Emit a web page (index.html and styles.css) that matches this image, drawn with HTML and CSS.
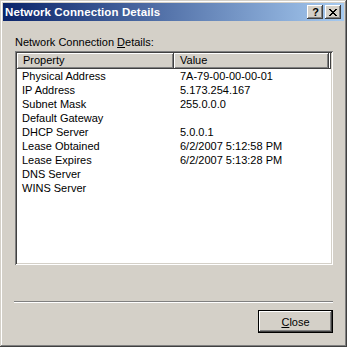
FILE: index.html
```html
<!DOCTYPE html>
<html>
<head>
<meta charset="utf-8">
<link rel="stylesheet" href="styles.css">
</head>
<body>
<div class="window">
  <div class="titlebar">
    <span class="title">Network Connection Details</span>
    <div class="tbtns">
      <div class="tbtn help">?</div>
      <div class="tbtn close-x">
        <svg width="8" height="7" viewBox="0 0 8 7"><path d="M0 0h2v1h1v1h2v-1h1v-1h2v1h-1v1h-1v1h-1v1h1v1h1v1h1v1h-2v-1h-1v-1h-2v1h-1v1h-2v-1h1v-1h1v-1h1v-1h-1v-1h-1v-1h-1z" fill="#000"/></svg>
      </div>
    </div>
  </div>
  <div class="content">
    <div class="label">Network Connection <u>D</u>etails:</div>
    <div class="list">
      <div class="header">
        <div class="hcell col1">Property</div>
        <div class="hcell col2">Value</div>
        <div class="hcell rest"></div>
      </div>
      <div class="rows">
        <div class="row"><span class="c1">Physical Address</span><span class="c2">7A-79-00-00-00-01</span></div>
        <div class="row"><span class="c1">IP Address</span><span class="c2">5.173.254.167</span></div>
        <div class="row"><span class="c1">Subnet Mask</span><span class="c2">255.0.0.0</span></div>
        <div class="row"><span class="c1">Default Gateway</span><span class="c2"></span></div>
        <div class="row"><span class="c1">DHCP Server</span><span class="c2">5.0.0.1</span></div>
        <div class="row"><span class="c1">Lease Obtained</span><span class="c2">6/2/2007 5:12:58 PM</span></div>
        <div class="row"><span class="c1">Lease Expires</span><span class="c2">6/2/2007 5:13:28 PM</span></div>
        <div class="row"><span class="c1">DNS Server</span><span class="c2"></span></div>
        <div class="row"><span class="c1">WINS Server</span><span class="c2"></span></div>
      </div>
    </div>
    <div class="sep"></div>
    <div class="btnrow">
      <div class="button"><span class="btxt"><u>C</u>lose</span></div>
    </div>
  </div>
</div>
</body>
</html>
```
FILE: styles.css
```css
html, body {
  margin: 0;
  padding: 0;
  background: #D4D0C8;
}
body {
  font-family: "Liberation Sans", Arial, sans-serif;
  font-size: 11px;
  color: #000;
}
.window {
  box-sizing: border-box;
  width: 347px;
  height: 347px;
  padding: 3px;
  background: #D4D0C8;
  box-shadow: inset -1px -1px #404040, inset 1px 1px #D4D0C8, inset -2px -2px #808080, inset 2px 2px #FFFFFF;
  display: flex;
  flex-direction: column;
}
.titlebar {
  height: 18px;
  background: linear-gradient(to right, #0A246A, #A6CAF0);
  display: flex;
  align-items: center;
  padding-left: 2px;
  padding-right: 3px;
}
.title {
  flex: 1;
  color: #fff;
  font-weight: bold;
  font-size: 11.5px;
  font-family: "Liberation Sans", Arial, sans-serif;
  letter-spacing: 0.1px;
}
.tbtns {
  display: flex;
  gap: 2px;
}
.tbtn {
  box-sizing: border-box;
  width: 16px;
  height: 14px;
  background: #D4D0C8;
  box-shadow: inset -1px -1px #404040, inset 1px 1px #FFFFFF, inset -2px -2px #808080;
  display: flex;
  align-items: center;
  justify-content: center;
}
.help {
  font-weight: bold;
  font-size: 11px;
  line-height: 14px;
  padding-left: 1px;
}
.close-x svg {
  display: block;
}
.content {
  flex: 1;
  padding: 14px 11px 0 12px;
  display: flex;
  flex-direction: column;
}
.label {
  line-height: 14px;
  margin-bottom: 2px;
}
.list {
  box-sizing: border-box;
  height: 214px;
  background: #fff;
  box-shadow: inset 1px 1px #808080, inset -1px -1px #FFFFFF, inset 2px 2px #404040, inset -2px -2px #D4D0C8;
  padding: 2px;
  display: flex;
  flex-direction: column;
}
.header {
  display: flex;
  height: 16px;
}
.hcell {
  box-sizing: border-box;
  height: 16px;
  background: #D4D0C8;
  box-shadow: inset -1px -1px #404040, inset 1px 1px #FFFFFF, inset -2px -2px #808080;
  line-height: 15px;
  padding-left: 6px;
}
.col1 { width: 157px; }
.col2 { width: 155px; }
.rest { flex: 1; padding: 0; }
.rows {
  display: flex;
  flex-direction: column;
}
.row {
  display: flex;
  height: 14px;
  line-height: 14px;
}
.c1 {
  width: 157px;
  padding-left: 5px;
  box-sizing: border-box;
}
.c2 {
  padding-left: 6px;
}
.sep {
  margin-top: 36px;
  border-top: 1px solid #808080;
  border-bottom: 1px solid #FFFFFF;
  height: 0;
  margin-left: -1px;
}
.btnrow {
  display: flex;
  justify-content: flex-end;
  margin-top: 7px;
}
.button {
  box-sizing: border-box;
  width: 75px;
  height: 23px;
  background: #D4D0C8;
  border: 1px solid #000;
  box-shadow: inset -1px -1px #404040, inset 1px 1px #FFFFFF, inset -2px -2px #808080;
  display: flex;
  align-items: center;
  justify-content: center;
}
.btxt {
  line-height: 14px;
}
```
